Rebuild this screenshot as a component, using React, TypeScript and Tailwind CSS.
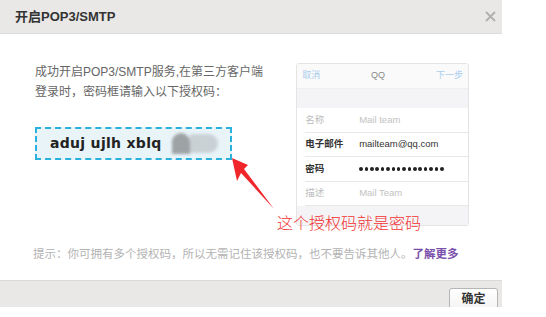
import React from "react";

const cjk = { fontFamily: '"Liberation Sans", "Noto Sans CJK SC", sans-serif' };

type RowType = {
  label: string;
  value?: string;
  muted?: boolean;
  dots?: boolean;
};

const rows: RowType[] = [
  { label: "名称", value: "Mail team", muted: true },
  { label: "电子邮件", value: "mailteam@qq.com" },
  { label: "密码", dots: true },
  { label: "描述", value: "Mail Team", muted: true },
];

const PhonePreview = () => (
  <div className="w-[176px] h-[163px] mt-[1px] border border-[#e4e4e4] rounded-[3px] bg-white flex flex-col overflow-hidden">
    <div className="h-[25px] shrink-0 flex items-center justify-between px-[5px] bg-[#fafafb] border-b border-[#efefef] text-[9px]">
      <span className="text-[#a9cdec]">取消</span>
      <span className="text-[#888]">QQ</span>
      <span className="text-[#a9cdec]">下一步</span>
    </div>
    <div className="h-[19px] shrink-0 bg-[#f4f4f6]" />
    <div className="flex flex-col">
      {rows.map((row) => (
        <div key={row.label} className="h-[24.5px] pl-[8px] flex">
          <div className="flex-1 flex items-center border-b border-[#e8e8e8] text-[9.5px]">
            <span
              className={
                row.muted
                  ? "w-[54px] text-[#bdbdbd]"
                  : "w-[54px] text-[#333] font-semibold"
              }
            >
              {row.label}
            </span>
            {row.dots ? (
              <span className="flex gap-[1.8px]">
                {Array.from({ length: 16 }).map((_, i) => (
                  <span key={i} className="w-[3.6px] h-[3.6px] rounded-full bg-[#222]" />
                ))}
              </span>
            ) : (
              <span className={row.muted ? "text-[#c2c2c2]" : "text-[#333]"}>
                {row.value}
              </span>
            )}
          </div>
        </div>
      ))}
    </div>
    <div className="flex-1 bg-[#f4f4f6]" />
  </div>
);

const App = () => {
  return (
    <div className="w-[546px] h-[317px] bg-white relative overflow-hidden" style={cjk}>
      <div className="w-[502px] flex flex-col">
        <div className="h-[34px] bg-[#e9e8e6] border-b border-[#dcdcdc] flex items-center justify-between pl-[15px] pr-[6px]">
          <span className="text-[13px] font-bold text-[#333]">开启POP3/SMTP</span>
          <svg width="11" height="11" viewBox="0 0 11 11">
            <path d="M1 1 L10 10 M10 1 L1 10" stroke="#b0b0b0" strokeWidth="1.8" />
          </svg>
        </div>

        <div className="h-[246px] flex flex-col px-[33px] pt-[28px]">
          <div className="flex">
            <div className="w-[268px] pl-[2px] flex flex-col">
              <p className="text-[12px] leading-[20px] text-[#666]">
                成功开启POP3/SMTP服务,在第三方客户端
                <br />
                登录时，密码框请输入以下授权码：
              </p>
              <div className="mt-[25px] w-[197px] h-[33px] border-2 border-dashed border-[#2ab0dc] bg-[#e9f4f9] flex items-center pl-[13px]">
                <span
                  className="text-[14px] font-bold text-[#222] tracking-[0.3px]"
                  style={{ fontFamily: '"DejaVu Sans", sans-serif' }}
                >
                  aduj ujlh xblq
                </span>
                <span className="ml-[10px] flex items-center blur-[1.5px]">
                  <span className="w-[18px] h-[21px] rounded-t-full rounded-b-[4px] bg-[#9da2a4]" />
                  <span className="w-[28px] h-[19px] rounded-r-full bg-[#c9d1d5]" />
                </span>
              </div>
            </div>
            <PhonePreview />
          </div>
          <p className="mt-[20px] text-[11.5px] leading-[16px] text-[#b3b3b3]">
            提示：你可拥有多个授权码，所以无需记住该授权码，也不要告诉其他人。
            <span className="text-[#7a4fab] font-bold">了解更多</span>
          </p>
        </div>

        <div className="h-[27px] bg-[#e9e8e6] border-t border-[#d9d9d9] flex justify-end pr-[4px] pt-[7px] overflow-hidden">
          <button className="w-[49px] h-[26px] shrink-0 border border-[#b5b5b5] rounded-[3px] bg-gradient-to-b from-white to-[#f1f1f1] text-[12px] leading-[14px] font-bold text-[#333] flex justify-center pt-[3px]">
            确定
          </button>
        </div>
      </div>

      <svg
        className="absolute left-0 top-0 pointer-events-none"
        width="546"
        height="317"
        viewBox="0 0 546 317"
      >
        <polygon
          points="232,158 248,165 244,169 274,209 241,173 237,181"
          fill="#f0262a"
        />
      </svg>
      <span
        className="absolute left-[277px] top-[212px] text-[16px] leading-[20px] text-[#f23232] font-light whitespace-nowrap"
        style={{ fontFamily: '"Noto Sans CJK SC", sans-serif' }}
      >
        这个授权码就是密码
      </span>
    </div>
  );
};

export default App;
